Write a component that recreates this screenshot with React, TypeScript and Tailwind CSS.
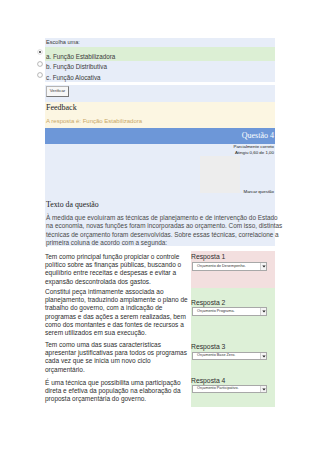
import React from "react";

const BLUE = "bg-[#e7edf8]";

function Radio({ checked }: { checked?: boolean }) {
  return (
    <svg width="6" height="6" viewBox="0 0 6 6">
      <circle cx="3" cy="3" r="2.4" fill="#fff" stroke={checked ? "#c8c8c8" : "#8a8a8a"} strokeWidth="0.6" />
      {checked && <circle cx="3" cy="3" r="1.1" fill="#444" />}
    </svg>
  );
}

function Choice({ label, checked, h, bg, pt }: { label: string; checked?: boolean; h: string; bg: string; pt: string }) {
  return (
    <div className={`-ml-[10px] flex ${h}`}>
      <div className={`w-[10px] bg-white flex justify-center ${pt}`}>
        <Radio checked={checked} />
      </div>
      <div className={`flex-1 ${bg} flex items-end pl-[1px] text-[6.3px] leading-[9px] text-[#3a3a3a]`}>{label}</div>
    </div>
  );
}

function Select({ text, h }: { text: string; h: string }) {
  return (
    <div className={`flex ${h} w-[75px] ml-[1px] border border-[#a8a8a8] bg-white items-center`}>
      <span className="flex-1 pl-[4px] text-[3.8px] leading-none whitespace-nowrap text-[#333]">{text}</span>
      <span className="w-[6px] h-full border-l border-[#d0d0d0] bg-[#f4f4f4] flex items-center justify-center">
        <svg width="4" height="3" viewBox="0 0 4 3">
          <path d="M0.3 0.5 L3.7 0.5 L2 2.6 Z" fill="#222" />
        </svg>
      </span>
    </div>
  );
}

function Lines({ lines }: { lines: string[] }) {
  return (
    <>
      {lines.map((l, i) => (
        <div key={i} className="whitespace-nowrap">
          {l}
        </div>
      ))}
    </>
  );
}

export default function App() {
  const para = [
    "À medida que evoluíram as técnicas de planejamento e de intervenção do Estado",
    "na economia, novas funções foram incorporadas ao orçamento. Com isso, distintas",
    "técnicas de orçamento foram desenvolvidas. Sobre essas técnicas, correlacione a",
  ];
  return (
    <div className="w-[320px] h-[453px] bg-white overflow-hidden font-['Liberation_Sans',Arial,sans-serif] text-[#333]">
      <div className="pt-[38px] ml-[45px] w-[230px]">
        <div className={`${BLUE} h-[9px] pl-[1px] text-[5.6px] leading-[9px] text-[#3a3a3a]`}>Escolha uma:</div>
        <Choice label="a. Função Estabilizadora" checked h="h-[14px]" bg="bg-[#dcefd4]" pt="pt-[2px]" />
        <Choice label="b. Função Distributiva" h="h-[10px]" bg={BLUE} pt="pt-[0px]" />
        <Choice label="c. Função Alocativa" h="h-[11px]" bg={BLUE} pt="pt-[1px]" />
        <div className="h-[3px]" />
        <div className={`${BLUE} h-[17px] pl-[1px] pt-[1px]`}>
          <div className="h-[11px] w-[23px] border border-[#b5b5b5] border-r-[#777] border-b-[#777] bg-[#f7f7f7] flex items-center justify-center text-[4.3px] text-[#333]">
            Verificar
          </div>
        </div>
        <div className="bg-[#fcf6e2] h-[26px] pl-[1px]">
          <div className="font-['Liberation_Serif',serif] text-[8px] leading-[9px] pt-[1px] text-[#222]">Feedback</div>
          <div className="mt-[5px] text-[6px] leading-[8px] text-[#c9a868]">A resposta é: Função Estabilizadora</div>
        </div>
        <div className="bg-[#6d97d8] h-[16px] text-right pr-[1px] font-['Liberation_Serif',serif] text-[8px] leading-[16px] text-white">
          Questão 4
        </div>
        <div className={`${BLUE} h-[102px] text-[#333]`}>
          <div className="text-right text-[4.4px] leading-[5.5px] pr-[1px] pt-[0px] text-[#222]">
            <div>Parcialmente correto</div>
            <div>Atingiu 0,60 de 1,00</div>
          </div>
          <div className="flex justify-end items-end mt-[1px]">
            <div className="w-[40px] h-[37px] bg-[#ededed]" />
            <div className="w-[35px] text-right pr-[1px] text-[4.4px] leading-[5px] text-[#222] translate-y-[1px]">Marcar questão</div>
          </div>
          <div className="mt-[7px] pl-[1px] font-['Liberation_Serif',serif] text-[7.8px] leading-[10px] text-[#222]">Texto da questão</div>
          <div className="mt-[4px] pl-[1px] text-[6.4px] leading-[8.3px] text-[#4a4a4a]">
            {para.map((l, i) => (
              <div key={i} className="whitespace-nowrap text-justify [text-align-last:justify]">
                {l}
              </div>
            ))}
            <div className="whitespace-nowrap">primeira coluna de acordo com a segunda:</div>
          </div>
        </div>
        <div className="h-[5px]" />
        <div className="text-[6.5px] leading-[8.2px] text-[#2e2e2e]">
          <div className="flex h-[37px]">
            <div className="w-[146px] pt-[2px]">
              <Lines
                lines={[
                  "Tem como principal função propiciar o controle",
                  "político sobre as finanças públicas, buscando o",
                  "equilíbrio entre receitas e despesas e evitar a",
                  "expansão descontrolada dos gastos.",
                ]}
              />
            </div>
            <div className="flex-1 bg-[#f3dfdf] pt-[2px]">
              <div className="leading-[8px] text-[6.8px]">Resposta 1</div>
              <div className="mt-[1px]">
                <Select text="Orçamento de Desempenho." h="h-[9px]" />
              </div>
            </div>
          </div>
          <div className="flex h-[51px]">
            <div className="w-[146px] pt-[0px]">
              <Lines
                lines={[
                  "Constitui peça intimamente associada ao",
                  "planejamento, traduzindo amplamente o plano de",
                  "trabalho do governo, com a indicação de",
                  "programas e das ações a serem realizadas, bem",
                  "como dos montantes e das fontes de recursos a",
                  "serem utilizados em sua execução.",
                ]}
              />
            </div>
            <div className="flex-1 bg-[#ddf0d7] pt-[11px]">
              <div className="leading-[8px] text-[6.8px]">Resposta 2</div>
              <Select text="Orçamento Programa." h="h-[9px]" />
            </div>
          </div>
          <div className="flex h-[36px]">
            <div className="w-[146px] pt-[2px]">
              <Lines
                lines={[
                  "Tem como uma das suas características",
                  "apresentar justificativas para todos os programas",
                  "cada vez que se inicia um novo ciclo",
                  "orçamentário.",
                ]}
              />
            </div>
            <div className="flex-1 bg-[#ddf0d7] pt-[4px]">
              <div className="leading-[8px] text-[6.8px]">Resposta 3</div>
              <div className="mt-[1px]">
                <Select text="Orçamento Base Zero." h="h-[8px]" />
              </div>
            </div>
          </div>
          <div className="flex h-[32px]">
            <div className="w-[146px] pt-[4px]">
              <Lines
                lines={[
                  "É uma técnica que possibilita uma participação",
                  "direta e efetiva da população na elaboração da",
                  "proposta orçamentária do governo.",
                ]}
              />
            </div>
            <div className="flex-1 bg-[#ddf0d7] pt-[2px]">
              <div className="leading-[8px] text-[6.8px]">Resposta 4</div>
              <Select text="Orçamento Participativo." h="h-[8px]" />
            </div>
          </div>
        </div>
      </div>
    </div>
  );
}
